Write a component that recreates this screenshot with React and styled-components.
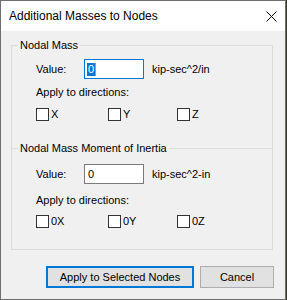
import React from "react";
import styled, { createGlobalStyle } from "styled-components";

const GlobalStyle = createGlobalStyle`
  html, body {
    margin: 0;
    padding: 0;
    background: #3b3b1e;
  }
  body {
    font-family: "Liberation Sans", Arial, sans-serif;
    font-size: 11px;
    color: #000;
  }
`;

const Window = styled.div`
  width: 286px;
  height: 300px;
  box-sizing: border-box;
  border: 1px solid #6f6f6f;
  background: #f0f0f0;
  display: flex;
  flex-direction: column;
`;

const TitleBar = styled.div`
  height: 30px;
  flex: none;
  background: #fff;
  display: flex;
  align-items: center;
  justify-content: space-between;
  padding: 0 8px;
  font-size: 12px;
`;

const Body = styled.div`
  flex: 1;
  display: flex;
  flex-direction: column;
  padding: 8px 0 0 10px;
`;

const Group = styled.fieldset`
  width: 262px;
  box-sizing: border-box;
  margin: ${(p) => (p.$joined ? "-6px 0 0 0" : "0")};
  padding: 0;
  border: 1px solid #dcdcdc;
  border-bottom: ${(p) => (p.$open ? "none" : "1px solid #dcdcdc")};
  min-inline-size: 0;
`;

const Legend = styled.legend`
  margin-left: 6px;
  padding: 0 2px;
  line-height: 13px;
  font-size: 11px;
`;

const GroupContent = styled.div`
  display: flex;
  flex-direction: column;
  padding: ${(p) => p.$pad};
`;

const ValueRow = styled.div`
  display: flex;
  align-items: center;
  height: 20px;
  margin-top: ${(p) => p.$top}px;
`;

const Label = styled.span`
  width: 48px;
`;

const Input = styled.div`
  width: 60px;
  height: 20px;
  box-sizing: border-box;
  border: 1px solid ${(p) => (p.$focus ? "#0078d7" : "#7a7a7a")};
  background: #fff;
  display: flex;
  align-items: center;
  padding-left: 2px;
`;

const Selected = styled.span`
  background: #0078d7;
  color: #fff;
  line-height: 13px;
  padding: 0 1px;
  border-right: 1px solid #ff8a28;
`;

const Plain = styled.span`
  padding-left: 1px;
`;

const Units = styled.span`
  margin-left: 8px;
`;

const Caption = styled.div`
  line-height: 13px;
  margin-top: ${(p) => p.$top}px;
`;

const Checks = styled.div`
  display: grid;
  grid-template-columns: 72px 69px auto;
  margin-top: ${(p) => p.$top}px;
`;

const Check = styled.label`
  display: flex;
  align-items: center;
  height: 13px;
  line-height: 13px;
`;

const Box = styled.span`
  width: 13px;
  height: 13px;
  box-sizing: border-box;
  border: 1px solid #333;
  background: #fff;
  margin-right: 2px;
`;

const ButtonRow = styled.div`
  display: flex;
  justify-content: flex-end;
  gap: 6px;
  padding-right: 11px;
  margin-top: 16px;
`;

const Button = styled.button`
  height: 22px;
  width: ${(p) => p.$w}px;
  box-sizing: border-box;
  padding: 0;
  background: #e1e1e1;
  border: ${(p) => (p.$primary ? "2px solid #0078d7" : "1px solid #adadad")};
  font-family: "Liberation Sans", Arial, sans-serif;
  font-size: 11px;
  color: #000;
`;

const CloseIcon = () => (
  <svg width="11" height="11" viewBox="0 0 11 11">
    <path d="M0.5 0.5 L10.5 10.5 M10.5 0.5 L0.5 10.5" stroke="#000" strokeWidth="1" />
  </svg>
);

const Directions = ({ items, top }) => (
  <Checks $top={top}>
    {items.map((d) => (
      <Check key={d}>
        <Box />
        {d}
      </Check>
    ))}
  </Checks>
);

export default function App() {
  return (
    <>
      <GlobalStyle />
      <Window>
        <TitleBar>
          <span>Additional Masses to Nodes</span>
          <CloseIcon />
        </TitleBar>
        <Body>
          <Group $open>
            <Legend>Nodal Mass</Legend>
            <GroupContent $pad="0 0 27px 24px">
              <ValueRow $top={7}>
                <Label>Value:</Label>
                <Input $focus>
                  <Selected>0</Selected>
                </Input>
                <Units>kip-sec^2/in</Units>
              </ValueRow>
              <Caption $top={7}>Apply to directions:</Caption>
              <Directions items={["X", "Y", "Z"]} top={9} />
            </GroupContent>
          </Group>
          <Group $joined>
            <Legend>Nodal Mass Moment of Inertia</Legend>
            <GroupContent $pad="0 0 21px 24px">
              <ValueRow $top={9}>
                <Label>Value:</Label>
                <Input>
                  <Plain>0</Plain>
                </Input>
                <Units>kip-sec^2-in</Units>
              </ValueRow>
              <Caption $top={10}>Apply to directions:</Caption>
              <Directions items={["0X", "0Y", "0Z"]} top={8} />
            </GroupContent>
          </Group>
          <ButtonRow>
            <Button $primary $w={148}>Apply to Selected Nodes</Button>
            <Button $w={74}>Cancel</Button>
          </ButtonRow>
        </Body>
      </Window>
    </>
  );
}
